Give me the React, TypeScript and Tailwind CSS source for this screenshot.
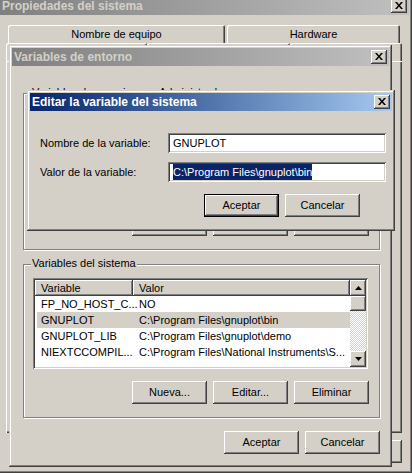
import type { ReactNode } from "react";

// classic 3D bevels
const raised =
  "shadow-[inset_-1px_-1px_0_#404040,inset_1px_1px_0_#ffffff,inset_-2px_-2px_0_#808080,inset_2px_2px_0_#d4d0c8]";
const frame =
  "shadow-[inset_-1px_-1px_0_#404040,inset_1px_1px_0_#d4d0c8,inset_-2px_-2px_0_#808080,inset_2px_2px_0_#ffffff]";
const sunken =
  "shadow-[inset_1px_1px_0_#808080,inset_-1px_-1px_0_#ffffff,inset_2px_2px_0_#404040,inset_-2px_-2px_0_#d4d0c8]";

function CloseBox() {
  return (
    <div className={`flex h-[14px] w-[16px] shrink-0 items-center justify-center bg-[#d4d0c8] ${raised}`}>
      <svg width="8" height="7" viewBox="0 0 8 7" className="mb-px">
        <path d="M0 0h2l2 2.4L6 0h2L5 3.5 8 7H6L4 4.6 2 7H0l3-3.5z" fill="#000" />
      </svg>
    </div>
  );
}

function TitleBar({ title, active }: { title: string; active?: boolean }) {
  return (
    <div
      className={
        active
          ? "flex h-[18px] shrink-0 items-center justify-between bg-linear-to-r from-[#0a246a] to-[#a6caf0] pl-[2px] pr-[2px] text-[12px] font-bold text-white"
          : "flex h-[18px] shrink-0 items-center justify-between bg-linear-to-r from-[#808080] to-[#c0c0c0] pl-[2px] pr-[2px] text-[12px] font-bold text-[#d4d0c8]"
      }
    >
      <span className="whitespace-nowrap">{title}</span>
      <CloseBox />
    </div>
  );
}

function Btn({ children, primary }: { children?: ReactNode; primary?: boolean }) {
  return (
    <div
      className={
        primary
          ? `flex h-[23px] w-[75px] items-center justify-center border border-black bg-[#d4d0c8] ${raised}`
          : `flex h-[23px] w-[75px] items-center justify-center bg-[#d4d0c8] ${raised}`
      }
    >
      {children}
    </div>
  );
}

function Tab({ label, w }: { label?: string; w: string }) {
  return (
    <div
      className={`flex h-full items-center justify-center rounded-t-[2px] shadow-[inset_1px_1px_0_#ffffff,inset_-1px_0_0_#404040,inset_-2px_0_0_#808080] ${w}`}
    >
      {label}
    </div>
  );
}

function GroupBox({ label, className, children }: { label: string; className: string; children?: ReactNode }) {
  return (
    <div
      className={`relative border border-[#808080] shadow-[inset_1px_1px_0_#ffffff,1px_1px_0_#ffffff] ${className}`}
    >
      <span className="absolute left-[7px] top-[-8px] bg-[#d4d0c8] px-px whitespace-nowrap">{label}</span>
      {children}
    </div>
  );
}

const rows = [
  { name: "FP_NO_HOST_C...", value: "NO" },
  { name: "GNUPLOT", value: "C:\\Program Files\\gnuplot\\bin", selected: true },
  { name: "GNUPLOT_LIB", value: "C:\\Program Files\\gnuplot\\demo" },
  { name: "NIEXTCCOMPIL...", value: "C:\\Program Files\\National Instruments\\S..." },
];

function Arrow({ down }: { down?: boolean }) {
  return (
    <div className={`flex h-[16px] w-[16px] shrink-0 items-center justify-center bg-[#d4d0c8] ${raised}`}>
      <svg width="7" height="4" viewBox="0 0 7 4">
        <path d={down ? "M0 0h7L3.5 4z" : "M3.5 0L7 4H0z"} fill="#000" />
      </svg>
    </div>
  );
}

function ListView() {
  return (
    <div className={`flex h-[91px] w-[335px] bg-white p-[2px] ${sunken}`}>
      <div className="flex min-w-0 flex-1 flex-col overflow-hidden">
        <div className="flex h-[16px] shrink-0">
          <div className={`flex w-[98px] items-center bg-[#d4d0c8] pl-[6px] ${raised}`}>Variable</div>
          <div className={`flex flex-1 items-center bg-[#d4d0c8] pl-[6px] ${raised}`}>Valor</div>
        </div>
        {rows.map((r) => (
          <div key={r.name} className="flex h-[16px] shrink-0 pl-[2px]">
            <div className={r.selected ? "flex flex-1 items-center bg-[#d4d0c8]" : "flex flex-1 items-center"}>
              <span className="w-[96px] shrink-0 whitespace-nowrap pl-[4px]">{r.name}</span>
              <span className="whitespace-nowrap pl-[6px]">{r.value}</span>
            </div>
          </div>
        ))}
      </div>
      <div className="flex w-[16px] shrink-0 flex-col">
        <Arrow />
        <div className={`h-[15px] shrink-0 bg-[#d4d0c8] ${raised}`} />
        <div className="flex-1 bg-[repeating-conic-gradient(#ffffff_0%_25%,#d4d0c8_0%_50%)] bg-[length:2px_2px]" />
        <Arrow down />
      </div>
    </div>
  );
}

export default function App() {
  return (
    <div className="relative h-[473px] w-[412px] overflow-hidden bg-[#d4d0c8] font-['Liberation_Sans',Arial,sans-serif] text-[11px] leading-[13px] text-black">
      {/* Propiedades del sistema */}
      <div className={`absolute left-[-3px] top-[-6px] flex h-[479px] w-[415px] flex-col bg-[#d4d0c8] p-[3px] ${frame}`}>
        <TitleBar title="Propiedades del sistema" />
        <div className="ml-[6px] mt-[10px] flex w-[396px] flex-col">
          <div className="flex h-[18px] gap-[2px] pl-[2px]">
            <Tab label="Nombre de equipo" w="w-[217px]" />
            <Tab label="Hardware" w="w-[173px]" />
          </div>
          {/* second tab row, covered by the child dialog */}
          <div className="flex h-[18px]">
            <Tab w="w-[141px]" />
            <Tab w="w-[143px]" />
            <Tab w="w-[112px]" />
          </div>
          <div className="h-[372px] shadow-[inset_1px_1px_0_#ffffff,inset_-1px_-1px_0_#404040,inset_-2px_-2px_0_#808080]" />
        </div>
        <div className="mt-[7px] flex justify-end gap-[6px] pr-[7px]">
          <Btn />
          <Btn />
          <Btn />
        </div>
      </div>

      {/* Variables de entorno */}
      <div className={`absolute left-[9px] top-[45px] flex h-[422px] w-[383px] flex-col bg-[#d4d0c8] p-[3px] ${frame}`}>
        <TitleBar title="Variables de entorno" />
        <GroupBox
          label="Variables de usuario para Administrador"
          className="ml-[11px] mt-[27px] flex h-[157px] w-[357px] flex-col justify-end pb-[13px]"
        >
          <div className="flex justify-end gap-[6px] pr-[10px]">
            <Btn>Nueva...</Btn>
            <Btn>Editar...</Btn>
            <Btn>Eliminar</Btn>
          </div>
        </GroupBox>
        <GroupBox label="Variables del sistema" className="ml-[11px] mt-[14px] flex h-[154px] w-[357px] flex-col">
          <div className="ml-[9px] mt-[13px]">
            <ListView />
          </div>
          <div className="mt-[12px] flex justify-end gap-[6px] pr-[10px]">
            <Btn>Nueva...</Btn>
            <Btn>Editar...</Btn>
            <Btn>Eliminar</Btn>
          </div>
        </GroupBox>
        <div className="mt-[13px] flex justify-end gap-[6px] pr-[9px]">
          <Btn>Aceptar</Btn>
          <Btn>Cancelar</Btn>
        </div>
      </div>

      {/* Editar la variable del sistema */}
      <div className={`absolute left-[27px] top-[90px] flex h-[141px] w-[368px] flex-col bg-[#d4d0c8] p-[3px] ${frame}`}>
        <TitleBar title="Editar la variable del sistema" active />
        <div className="mt-[22px] flex items-center pl-[10px]">
          <span className="w-[128px] shrink-0">Nombre de la variable:</span>
          <div className={`flex h-[20px] w-[218px] items-center bg-white pl-[5px] ${sunken}`}>GNUPLOT</div>
        </div>
        <div className="mt-[9px] flex items-center pl-[10px]">
          <span className="w-[128px] shrink-0">Valor de la variable:</span>
          <div className={`flex h-[20px] w-[218px] items-center bg-white pl-[5px] ${sunken}`}>
            <span className="bg-[#0a246a] leading-[16px] whitespace-nowrap text-white">
              {"C:\\Program Files\\gnuplot\\bin"}
            </span>
          </div>
        </div>
        <div className="mt-[12px] flex justify-end gap-[6px] pr-[32px]">
          <Btn primary>Aceptar</Btn>
          <Btn>Cancelar</Btn>
        </div>
      </div>
    </div>
  );
}
